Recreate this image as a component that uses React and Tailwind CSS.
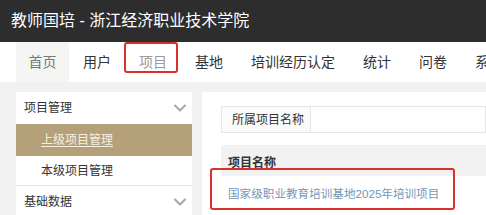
import { ChevronDown } from 'lucide-react';

const navItems = ['用户', '项目', '基地', '培训经历认定', '统计', '问卷', '系统'];

export default function App() {
  return (
    <div className="w-[486px] h-[215px] overflow-hidden bg-[#f1f1f1] font-['Liberation_Sans','Noto_Sans_CJK_SC',sans-serif] text-[#333]">
      <div className="h-[42px] bg-[#2d2d2d] text-white text-[16px] pl-[11px] flex items-center whitespace-nowrap">
        教师国培 - 浙江经济职业技术学院
      </div>

      <div className="h-[40px] bg-white flex items-stretch pl-4 text-[14px] whitespace-nowrap overflow-hidden">
        <div className="w-[53px] shrink-0 bg-[#f5f5f3] text-[#777] flex items-center justify-center">首页</div>
        {navItems.map((n) => (
          <div key={n} className={`relative shrink-0 px-[14px] flex items-center ${n === '项目' ? 'text-[#999]' : ''}`}>
            {n}
            {n === '项目' && (
              <span className="absolute left-[-1px] top-0 w-[54px] h-[31px] border-2 border-[#d8312b] rounded-[3px]" />
            )}
          </div>
        ))}
      </div>

      <div className="flex pt-[10px] pl-4 gap-[10px]">
        <div className="w-[176px] shrink-0 bg-white text-[12px]">
          <div className="h-[32px] pl-2 pr-[2px] flex items-center justify-between">
            项目管理
            <ChevronDown className="w-5 h-5 text-[#a8a8a8]" strokeWidth={2.5} />
          </div>
          <div className="h-[32px] pl-[25px] flex items-center bg-[#b4a079] text-[#f6f0e4] underline underline-offset-2">上级项目管理</div>
          <div className="h-[30px] pl-[25px] flex items-center border-b border-[#e8e8e8]">本级项目管理</div>
          <div className="h-[32px] pl-2 pr-[2px] flex items-center justify-between">
            基础数据
            <ChevronDown className="w-5 h-5 text-[#a8a8a8]" strokeWidth={2.5} />
          </div>
        </div>

        <div className="relative flex-1 bg-white pl-[19px] pt-[14px] h-[130px] text-[12px]">
          <div className="flex h-[27px] border border-[#e6e6e6]">
            <div className="w-[89px] pl-[10px] flex items-center border-r border-[#e6e6e6] bg-[#fbfbfb]">所属项目名称</div>
            <div className="flex-1" />
          </div>
          <div className="mt-[12px] h-[31px] bg-[#f2f2f2] pl-[7px] pt-[9px] font-bold">项目名称</div>
          <div className="h-[36px] pl-[7px] flex items-center text-[11.6px] text-[#7596b6] whitespace-nowrap">
            国家级职业教育培训基地2025年培训项目
          </div>
          <span className="absolute left-[8px] top-[76px] w-[245px] h-[42px] border-2 border-[#d8312b] rounded-[3px]" />
        </div>
      </div>
    </div>
  );
}
